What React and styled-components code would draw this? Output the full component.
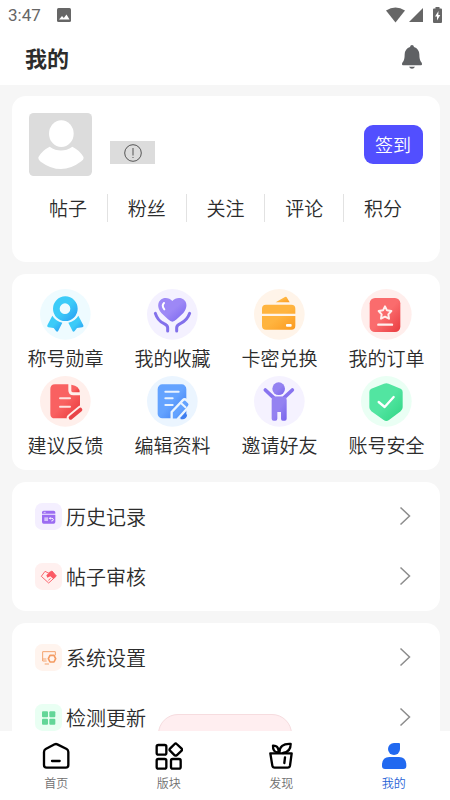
import React from 'react'
import styled, { createGlobalStyle } from 'styled-components'

const GlobalStyle = createGlobalStyle`
* {
  box-sizing: border-box;
}
body {
  margin: 0;
  background: #f6f6f6;
  color: #2c2c2c;
  font-family: "Noto Sans CJK SC", sans-serif;
  font-weight: 350;
}
a {
  color: inherit;
  text-decoration: none;
}
`

const Screen = styled.div`
  position: relative;
  display: flex;
  flex-direction: column;
  height: 100vh;
  overflow: hidden;
`

const StatusBar = styled.div`
  display: flex;
  align-items: center;
  justify-content: space-between;
  height: 30px;
  padding: 0 8px;
  background: #fff;
  color: #666;
`

const StatusGroup = styled.div`
  display: flex;
  align-items: center;
  gap: ${props => props.$gap};
`

const Clock = styled.span`
  font-family: Roboto, sans-serif;
  font-size: 17px;
  font-weight: 400;
  line-height: 20px;
`

const Header = styled.header`
  display: flex;
  align-items: center;
  justify-content: space-between;
  height: 55px;
  padding: 0 28px 2px 25px;
  background: #fff;
`

const Title = styled.h1`
  margin: 0;
  font-size: 22px;
  font-weight: 700;
  line-height: 32px;
`

const IconButton = styled.button`
  display: flex;
  padding: 0;
  border: 0;
  background: none;
`

const Content = styled.main`
  display: flex;
  flex: 1;
  flex-direction: column;
  gap: 12px;
  min-height: 0;
  padding: 11px 10px 11px 12px;
  overflow-y: auto;
  scrollbar-width: none;
`

const Card = styled.section`
  flex-shrink: 0;
  border-radius: 14px;
  background: #fff;
`

const ProfileCard = styled(Card)`
  padding: 17px 17px 40px;
`

const ProfileTop = styled.div`
  display: flex;
  align-items: center;
  justify-content: space-between;
`

const Identity = styled.div`
  display: flex;
  align-items: flex-end;
  gap: 18px;
`

const Badge = styled.span`
  display: flex;
  align-items: center;
  justify-content: center;
  width: 45px;
  height: 23px;
  margin-bottom: 12px;
  background: #dcdcdc;
`

const SignButton = styled.button`
  height: 39px;
  padding: 0 12px 2px 11px;
  border: 0;
  border-radius: 9px;
  background: #524fff;
  color: #fff;
  font-family: inherit;
  font-size: 18px;
  font-weight: inherit;
  line-height: 26px;
`

const Stats = styled.nav`
  display: grid;
  grid-template-columns: repeat(5, 1fr);
  margin-top: 18px;
`

const Stat = styled.a`
  height: 28px;
  border-right: 1px solid #e2e2e2;
  font-size: 19px;
  line-height: 28px;
  text-align: center;

  &:last-child {
    border-right-color: transparent;
  }
`

const ShortcutCard = styled(Card)`
  display: grid;
  grid-template-columns: repeat(4, 1fr);
  padding: 15px 0 7px;
`

const Shortcut = styled.a`
  display: flex;
  flex-direction: column;
  align-items: center;
  font-size: 19px;
  line-height: 36px;
  white-space: nowrap;
`

const ListCard = styled(Card)`
  padding: 4px 29px 5px 23px;
`

const Row = styled.a`
  display: flex;
  align-items: center;
  gap: 4px;
  height: 60px;
  font-size: 20px;
`

const RowLabel = styled.span`
  flex: 1;
`

const Toast = styled.div`
  position: absolute;
  bottom: 46px;
  left: 50%;
  width: 134px;
  height: 40px;
  border: 1px solid #f6dcdf;
  border-radius: 20px;
  background: #ffeef0;
  transform: translateX(-50%);
`

const TabBar = styled.nav`
  position: relative;
  display: grid;
  grid-template-columns: repeat(4, 1fr);
  height: 69px;
  padding-top: 11px;
  background: #fff;
`

const Tab = styled.a`
  display: flex;
  flex-direction: column;
  align-items: center;
  gap: 3px;
  color: ${props => props.$active ? '#1f62d6' : '#707070'};
  font-size: 12px;
  line-height: 20px;
`

const Svg = styled.svg`
  display: block;
  flex-shrink: 0;
`

const Gradient = ({ id, from, to }) => (
  <linearGradient id={id} x1="0" y1="0" x2="1" y2="1">
    <stop offset="0" stopColor={from} />
    <stop offset="0.5" stopColor={from} />
    <stop offset="1" stopColor={to} />
  </linearGradient>
)

const Round = ({ id, bg, from, to, children }) => (
  <Svg width="51" height="51" viewBox="0 0 153 153" fill={`url(#${id})`} aria-hidden="true">
    <defs><Gradient id={id} from={from} to={to} /></defs>
    <circle cx="76" cy="76" r="76" fill={bg} />
    {children}
  </Svg>
)

const MedalIcon = () => (
  <Round id="medal" bg="#eefbff" from="#3ccbf8" to="#2799f3">
    <path fillRule="evenodd" d="M76 22a37 37 0 1 0 0 74a37 37 0 1 0 0-74zM75 43a16 16 0 1 1 0 32a16 16 0 1 1 0-32z" />
    <path d="M37 80Q47 97 67 101L54 127Q51 130 48 126L41 117L25 115Q20 114 22 109Z" />
    <path d="M115 80Q105 97 85 101L98 127Q101 130 104 126L111 117L127 115Q132 114 130 109Z" />
  </Round>
)

const HeartIcon = () => (
  <Round id="heart" bg="#f4f1ff" from="#9d88f6" to="#7765ee">
    <path d="M76 98Q71 98 63 91L43 72C30 57 31 39 43 31C54 23 68 27 76 36C84 27 98 23 109 31C121 39 122 57 109 72L89 91Q81 98 76 98Z" />
    <path d="M52 61Q43 50 51 42" fill="none" stroke="#fff" strokeWidth="6" strokeLinecap="round" />
    <path d="M25 73Q32 95 50 103Q62 108 62 116V126M128 73Q120 95 101 103Q89 108 89 116V126" fill="none" stroke="#8270eb" strokeWidth="9" strokeLinecap="round" />
  </Round>
)

const WalletIcon = () => (
  <Round id="wallet" bg="#fff4e9" from="#ffb43f" to="#fb9a20">
    <path d="M65 40L93 24Q97 22 99 26L107 40Z" />
    <path d="M36 47H112Q124 47 124 59V74H24V59Q24 47 36 47ZM24 81H124V110Q124 122 112 122H36Q24 122 24 110Z" />
    <rect x="96" y="105" width="17" height="8" rx="3" fill="#fff" />
  </Round>
)

const OrderIcon = () => (
  <Round id="order" bg="#ffeeec" from="#fa6c6d" to="#e93b40">
    <rect x="26" y="27" width="92" height="102" rx="16" />
    <path d="M72 52L78 64L91 66L82 76L84 89L72 83L60 89L62 76L53 66L66 64Z" fill="none" stroke="#fff0ee" strokeWidth="6" strokeLinejoin="round" />
    <path d="M52 107H93" stroke="#fff0ee" strokeWidth="7" strokeLinecap="round" />
  </Round>
)

const FeedbackIcon = () => (
  <Round id="feedback" bg="#ffefeb" from="#f96161" to="#e83538">
    <path d="M45 25H85V43Q85 58 100 58H120V92L86 127H45Q31 127 31 113V39Q31 25 45 25Z" />
    <path d="M94 26Q119 30 119 49H99Q94 49 94 44Z" />
    <path d="M60 67H90M60 92H90" stroke="#ffe1df" strokeWidth="6" strokeLinecap="round" />
    <path d="M121 101L92 125" stroke="#ffefeb" strokeWidth="23" strokeLinecap="round" />
    <path d="M121 101L92 125" stroke="#e94347" strokeWidth="12" strokeLinecap="round" />
  </Round>
)

const EditIcon = () => (
  <Round id="edit" bg="#ebf5ff" from="#64a3ff" to="#3777ee">
    <rect x="32" y="25" width="86" height="102" rx="14" />
    <path d="M55 47H95M55 67H77M55 87H77" stroke="#e9f3ff" strokeWidth="6" strokeLinecap="round" />
    <path d="M74 131V108L107 73Q113 67 119 73L126 80Q131 86 125 92L90 131Z" stroke="#ebf5ff" strokeWidth="7" strokeLinejoin="round" />
    <path d="M101 80L117 95" stroke="#ebf5ff" strokeWidth="6" />
    <path d="M101 127H108Q117 126 118 115" fill="none" stroke="#3f7eef" strokeWidth="5" />
  </Round>
)

const FriendIcon = () => (
  <Round id="friend" bg="#f5f2ff" from="#9482f1" to="#7863ed">
    <circle cx="74" cy="38" r="19" />
    <path d="M34 42L61 67H88L115 42" fill="none" stroke="#8874ef" strokeWidth="11" strokeLinecap="round" strokeLinejoin="round" />
    <path d="M55 63H96L98 72V128Q98 134 92 134H86Q81 134 81 128V108H70V128Q70 134 64 134H59Q53 134 53 128V72Z" />
  </Round>
)

const ShieldIcon = () => (
  <Round id="shield" bg="#eafff4" from="#52e5a1" to="#2fd583">
    <path d="M69 23Q76 20 83 23L119 38Q125 41 125 48V94Q125 101 119 106L84 132Q76 138 68 132L31 106Q25 101 25 94V48Q25 41 31 38Z" />
    <path d="M53 78L71 93L98 63" fill="none" stroke="#fff" strokeWidth="7" strokeLinecap="round" strokeLinejoin="round" />
  </Round>
)

const Tile = ({ bg, children }) => (
  <Svg width="27" height="27" viewBox="0 0 81 81" fill="none" aria-hidden="true">
    <rect width="81" height="81" rx="22" fill={bg} />
    {children}
  </Svg>
)

const HistoryIcon = () => (
  <Tile bg="#f4efff">
    <path d="M26 23H56Q61 23 61 28V32H21V28Q21 23 26 23ZM21 35H61V57Q61 62 56 62H26Q21 62 21 57Z" fill="#9b6cf2" />
    <path d="M28 43H39V54H28Z" fill="#d5c1fb" />
    <path d="M46 43L43 46L46 49M44 46H50Q55 46 55 50Q55 54 49 54" stroke="#fff" strokeWidth="3" />
    <path d="M26 28H32" stroke="#fff" strokeWidth="2" />
  </Tile>
)

const AuditIcon = () => (
  <Tile bg="#fff0ef">
    <path d="M30 25L40 30L51 24L64 39L41 60L19 40Z" stroke="#fb6670" strokeWidth="3" strokeLinejoin="round" />
    <path d="M51 24L64 39L55 48L46 40L37 44L34 37L42 29Z" fill="#fb5964" />
    <path d="M40 52L47 46" stroke="#fb6670" strokeWidth="3" />
  </Tile>
)

const SettingsIcon = () => (
  <Tile bg="#fff4ee">
    <path d="M35 51H23V23H61V34M23 45H34M29 60H42" stroke="#f4a36e" strokeWidth="3" strokeLinejoin="round" />
    <path d="M45 34H57L62 44L57 54H45L40 44Z" stroke="#f49b62" strokeWidth="5" strokeLinejoin="round" />
  </Tile>
)

const UpdateIcon = () => (
  <Tile bg="#e9fff3">
    <g fill="#63d698">
      <rect x="21" y="22" width="18" height="18" rx="3" />
      <rect x="43" y="22" width="18" height="18" rx="3" />
      <rect x="21" y="44" width="18" height="18" rx="3" />
      <rect x="43" y="44" width="18" height="18" rx="3" />
    </g>
  </Tile>
)

const Chevron = () => (
  <Svg width="12" height="20" viewBox="0 0 12 20" fill="none" stroke="#8c8c8c" strokeWidth="1.5" aria-hidden="true">
    <path d="M1.5 1.5L10.5 10L1.5 18.5" />
  </Svg>
)

const TabSvg = ({ children }) => (
  <Svg width="28" height="28" viewBox="0 0 84 84" fill="none" stroke="#000" strokeWidth="7" strokeLinecap="round" strokeLinejoin="round" aria-hidden="true">
    {children}
  </Svg>
)

const HomeIcon = () => (
  <TabSvg>
    <path d="M38 7Q42 5 46 7L74 21Q79 24 79 30V69Q79 77 71 77H14Q6 77 6 69V30Q6 24 11 21ZM30 57H53" />
  </TabSvg>
)

const BlocksIcon = () => (
  <TabSvg>
    <rect x="5" y="9" width="29" height="29" rx="5" />
    <rect x="5" y="51" width="29" height="29" rx="5" />
    <rect x="48" y="51" width="29" height="29" rx="5" />
    <path d="M59 6Q62 3 65 6L80 20Q82 23 80 26L65 40Q62 42 59 40L45 26Q42 23 45 20Z" />
  </TabSvg>
)

const DiscoverIcon = () => (
  <TabSvg>
    <path d="M10 34H74L69 71Q68 77 62 77H23Q17 77 16 71Z" />
    <path d="M54 46L52 63" />
    <path d="M33 31Q17 31 18 11Q33 10 35 27M37 32Q37 4 71 6Q71 30 48 33" />
  </TabSvg>
)

const MineIcon = () => (
  <Svg width="28" height="28" viewBox="0 0 84 84" fill="#2169f0" aria-hidden="true">
    <path d="M42 3H57Q60 3 60 6V21A18 18 0 1 1 42 3Z" />
    <path d="M28 45H57Q79 45 79 70V72Q79 81 70 81H15Q6 81 6 72V70Q6 45 28 45Z" />
  </Svg>
)

const shortcuts = [
  { label: '称号勋章', Icon: MedalIcon },
  { label: '我的收藏', Icon: HeartIcon },
  { label: '卡密兑换', Icon: WalletIcon },
  { label: '我的订单', Icon: OrderIcon },
  { label: '建议反馈', Icon: FeedbackIcon },
  { label: '编辑资料', Icon: EditIcon },
  { label: '邀请好友', Icon: FriendIcon },
  { label: '账号安全', Icon: ShieldIcon },
]

const lists = [
  [
    { label: '历史记录', Icon: HistoryIcon },
    { label: '帖子审核', Icon: AuditIcon },
  ],
  [
    { label: '系统设置', Icon: SettingsIcon },
    { label: '检测更新', Icon: UpdateIcon },
  ],
]

const tabs = [
  { label: '首页', Icon: HomeIcon },
  { label: '版块', Icon: BlocksIcon },
  { label: '发现', Icon: DiscoverIcon },
  { label: '我的', Icon: MineIcon, active: true },
]

const App = () => {
  return (
    <>
      <GlobalStyle />
      <Screen>
        <StatusBar>
          <StatusGroup $gap="16px">
            <Clock>3:47</Clock>
            <Svg width="14" height="14" viewBox="0 0 14 14">
              <rect width="14" height="14" rx="1.5" fill="#666" />
              <path d="M2 11.5L5 8L6.8 10L9.5 6.5L12.5 11.5Z" fill="#fff" />
            </Svg>
          </StatusGroup>
          <StatusGroup $gap="4px">
            <Svg width="19" height="16" viewBox="0 0 19 16" fill="#666">
              <path d="M0 3.5Q9.5 -2.5 19 3.5L9.5 15.5Z" />
            </Svg>
            <Svg width="14" height="14" viewBox="0 0 14 14" fill="#666">
              <path d="M14 0V14H0Z" />
            </Svg>
            <Svg width="15" height="16" viewBox="0 0 15 16" fill="#666">
              <path d="M8.5 0H12.5V1.5H14Q15 1.5 15 2.5V15Q15 16 14 16H7Q6 16 6 15V2.5Q6 1.5 7 1.5H8.5Z" />
              <path d="M11.5 4L8 9.5H10V13.5L13.3 8H11.3Z" fill="#fff" />
            </Svg>
          </StatusGroup>
        </StatusBar>
        <Header>
          <Title>我的</Title>
          <IconButton aria-label="通知">
            <Svg width="20" height="24" viewBox="0 0 60 72" fill="#5f6164">
              <path d="M30 0Q35 0 36 6Q51 11 52 28Q52 47 58 52Q60 54 60 58Q60 61 57 61H3Q0 61 0 58Q0 54 2 52Q8 47 8 28Q9 11 24 6Q25 0 30 0ZM21 65H39Q36 71 30 71Q24 71 21 65Z" />
            </Svg>
          </IconButton>
        </Header>
        <Content>
          <ProfileCard>
            <ProfileTop>
              <Identity>
                <Svg width="63" height="63" viewBox="0 0 189 189" fill="#fff">
                  <rect width="189" height="189" rx="14" fill="#dcdcdc" />
                  <ellipse cx="97" cy="62" rx="37" ry="40" />
                  <path d="M62 101Q96 124 130 101Q151 111 163 131Q166 139 157 145Q97 191 35 146Q25 138 29 131Q40 112 62 101Z" />
                </Svg>
                <Badge>
                  <Svg width="18" height="18" viewBox="0 0 18 18" fill="none" stroke="#555">
                    <circle cx="9" cy="9" r="8.3" />
                    <path d="M9 4V11.5M9 13V14" />
                  </Svg>
                </Badge>
              </Identity>
              <SignButton>签到</SignButton>
            </ProfileTop>
            <Stats>
              {['帖子', '粉丝', '关注', '评论', '积分'].map(label => (
                <Stat href="#" key={label}>{label}</Stat>
              ))}
            </Stats>
          </ProfileCard>
          <ShortcutCard>
            {shortcuts.map(({ label, Icon }) => (
              <Shortcut href="#" key={label}>
                <Icon />
                {label}
              </Shortcut>
            ))}
          </ShortcutCard>
          {lists.map((rows, i) => (
            <ListCard key={i}>
              {rows.map(({ label, Icon }) => (
                <Row href="#" key={label}>
                  <Icon />
                  <RowLabel>{label}</RowLabel>
                  <Chevron />
                </Row>
              ))}
            </ListCard>
          ))}
        </Content>
        <Toast />
        <TabBar>
          {tabs.map(({ label, Icon, active }) => (
            <Tab href="#" key={label} $active={active}>
              <Icon />
              {label}
            </Tab>
          ))}
        </TabBar>
      </Screen>
    </>
  )
}

export default App
